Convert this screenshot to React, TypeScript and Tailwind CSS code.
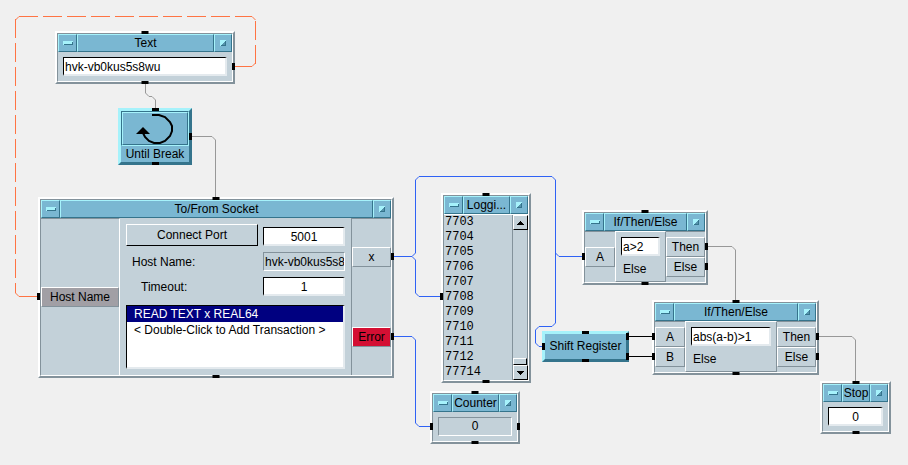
import React from "react";

interface NodeProps {
  title: string;
  className: string;
  children: React.ReactNode;
  ports?: string[];
}

interface WireProps {
  d: string;
  color: string;
  dash?: string;
}

const BLUE = "#2f62f5";
const GRAY = "#989898";
const ORANGE = "#ff7444";

const logLines = [
  "7703",
  "7704",
  "7705",
  "7706",
  "7707",
  "7708",
  "7709",
  "7710",
  "7711",
  "7712",
  "77714",
];

const wires: WireProps[] = [
  // feedback from Text to Host Name
  { d: "M235 66.5H252L255.5 63", color: ORANGE },
  { d: "M255.5 64V20", color: ORANGE, dash: "19 5" },
  { d: "M255.5 20L252 16.5", color: ORANGE },
  { d: "M19 16.5H252", color: ORANGE, dash: "19 5" },
  { d: "M19 16.5L15.5 20", color: ORANGE },
  { d: "M15.5 19V293", color: ORANGE, dash: "19 5" },
  { d: "M15.5 293L19 296.5H38", color: ORANGE },
  // sequence lines
  { d: "M145.5 84V93L149 96.5H152L155.5 100V109", color: GRAY },
  { d: "M192 136.5H212L215.5 140V198", color: GRAY },
  { d: "M708 246.5H732L735.5 250V301", color: GRAY },
  { d: "M819 336.5H852L855.5 340V381", color: GRAY },
  // data lines
  { d: "M394 256.5H412L415.5 253V180L419 176.5H552L555.5 180V323L552 326.5H539L535.5 330V343L539 346.5H542", color: BLUE },
  { d: "M412 256.5L415.5 260V293L419 296.5H441", color: BLUE },
  { d: "M555.5 253L559 256.5H582", color: BLUE },
  { d: "M394 336.5H412L415.5 340V423L419 426.5H431", color: BLUE },
  { d: "M629 336.5H652", color: "#000000" },
  { d: "M629 356.5H652", color: "#000000" },
];

const TOP = "-top-0.5 left-1/2 -translate-x-1/2 w-[7px] h-[3px]";
const BOTTOM = "-bottom-0.5 left-1/2 -translate-x-1/2 w-[7px] h-[3px]";

function Ports({ list }: { list: string[] }) {
  return (
    <>
      {list.map((place) => (
        <span key={place} className={`absolute bg-black ${place}`} />
      ))}
    </>
  );
}

function TitleBar({ title }: { title: string }) {
  const bevel =
    "border border-t-[#a6f2fb] border-l-[#a6f2fb] border-b-[#35748c] border-r-[#35748c]";
  return (
    <div className="flex h-[18px] bg-[#7ab7d2]">
      <button
        type="button"
        aria-label={`${title} menu`}
        className={`flex w-[19px] shrink-0 items-center justify-center ${bevel}`}
      >
        <svg width="10" height="4" shapeRendering="crispEdges">
          <path d="M0 0H10V1H9V3H1V4H0Z" fill="#a6f2fb" />
          <path d="M10 1V4H1V3H9V1Z" fill="#35748c" />
        </svg>
      </button>
      <h2
        className={`min-w-0 flex-1 overflow-hidden text-center leading-4 whitespace-nowrap ${bevel}`}
      >
        {title}
      </h2>
      <button
        type="button"
        aria-label={`Minimize ${title}`}
        className={`flex w-[18px] shrink-0 items-center justify-center ${bevel}`}
      >
        <svg width="6" height="6" shapeRendering="crispEdges">
          <path d="M0 0H6V1H5V2H4V3H3V4H2V5H1V6H0Z" fill="#a6f2fb" />
          <path d="M5 1H6V6H1V5H5Z" fill="#35748c" />
          <path d="M4 2H5V5H2V4H3V3H4Z" fill="#5593ac" />
        </svg>
      </button>
    </div>
  );
}

function Node({ title, className, children, ports = [] }: NodeProps) {
  return (
    <section
      className={`absolute border-2 border-t-white border-l-white border-b-[#83929b] border-r-[#83929b] ${className}`}
    >
      <div className="border border-t-[#83929b] border-l-[#83929b] border-b-white border-r-white bg-[#c3d1d9]">
        <TitleBar title={title} />
        {children}
      </div>
      <Ports list={[TOP, BOTTOM, ...ports]} />
    </section>
  );
}

function Field({
  label,
  value,
  className = "",
  id,
}: {
  label?: string;
  value: string;
  className?: string;
  id?: string;
}) {
  return (
    <input
      id={id}
      aria-label={label}
      defaultValue={value}
      className={`block h-[19px] w-full min-w-0 border border-r-2 border-b-2 border-t-black border-l-black border-b-[#e4eaee] border-r-[#e4eaee] bg-white pt-px pl-px leading-[15px] outline-none ${className}`}
    />
  );
}

function Terminal({
  name,
  className = "bg-[#c3d1d9]",
}: {
  name: string;
  className?: string;
}) {
  return (
    <div
      className={`h-5 border border-t-white border-l-white border-b-[#83929b] border-r-[#83929b] text-center leading-[18px] whitespace-nowrap ${className}`}
    >
      {name}
    </div>
  );
}

function Condition({
  inputs,
  value,
  label,
}: {
  inputs: string[];
  value: string;
  label: string;
}) {
  return (
    <div className="flex h-[51px]">
      <div
        className={`flex w-[30px] shrink-0 flex-col border-t border-[#83929b] ${
          inputs.length > 1 ? "pt-[5px]" : "justify-center"
        }`}
      >
        {inputs.map((name) => (
          <Terminal key={name} name={name} />
        ))}
      </div>
      <div className="min-w-0 flex-1 border border-t-white border-l-white border-b-[#83929b] border-r-[#83929b] px-[5px] pt-[5px]">
        <Field label={label} value={value} />
        <p className="pt-[5px] pl-0.5 leading-4">Else</p>
      </div>
      <div className="w-[39px] shrink-0 border-t border-[#83929b] pt-[5px]">
        <Terminal name="Then" />
        <Terminal name="Else" />
      </div>
    </div>
  );
}

function App() {
  const scrollButton =
    "flex h-[15px] shrink-0 items-center justify-center border border-t-white border-l-white border-b-black border-r-black bg-[#c3d1d9]";

  return (
    <main className="relative min-h-screen w-full overflow-hidden bg-[#f0f0f0] font-['Liberation_Sans',Arial,sans-serif] text-xs text-black">
      <svg
        className="absolute top-0 left-0"
        width="908"
        height="465"
        fill="none"
        aria-hidden="true"
      >
        {wires.map((wire) => (
          <path
            key={wire.d}
            d={wire.d}
            stroke={wire.color}
            strokeDasharray={wire.dash}
          />
        ))}
      </svg>

      <Node
        title="Text"
        className="top-[31px] left-[55px] w-[180px]"
        ports={["-right-0.5 top-[30px] h-[7px] w-[3px]"]}
      >
        <div className="px-[5px] py-[5px]">
          <Field label="Text value" value="hvk-vb0kus5s8wu" />
        </div>
      </Node>

      <section className="absolute top-[108px] left-[118px] w-[74px] border-3 border-t-[#a6f2fb] border-l-[#a6f2fb] border-b-[#35748c] border-r-[#35748c] bg-[#7ab7d2]">
        <div className="border border-[#a6f2fb] border-t-[#35748c] border-l-[#35748c]">
          <div className="flex h-[33px] items-center justify-center border border-t-[#a6f2fb] border-l-[#a6f2fb] border-b-[#35748c] border-r-[#35748c]">
            <svg width="38" height="31" viewBox="0 0 38 31" fill="none">
              <path
                d="M16 2H23L29 4L34 9L36 13V18L34 23L29 28L24 30H18L13 28L9 24L7 20"
                stroke="#000000"
                strokeWidth="2"
              />
              <path d="M7 14L14 21H0Z" fill="#000000" />
            </svg>
          </div>
        </div>
        <h2 className="text-center leading-4 whitespace-nowrap">Until Break</h2>
        <Ports
          list={[
            "-top-[3px] left-[31px] h-[3px] w-[7px]",
            "-bottom-[3px] left-[31px] h-[3px] w-[7px]",
            "-right-[3px] top-[22px] h-[7px] w-[3px]",
          ]}
        />
      </section>

      <Node
        title="To/From Socket"
        className="top-[197px] left-[38px] w-[356px]"
        ports={[
          "-left-[3px] top-[94px] h-[7px] w-[3px]",
          "-right-0.5 top-[54px] h-[7px] w-[3px]",
          "-right-0.5 top-[134px] h-[7px] w-[3px]",
        ]}
      >
        <div className="flex h-[157px]">
          <div className="w-[79px] shrink-0 border-t border-r border-t-[#83929b] border-r-white pt-[68px]">
            <Terminal name="Host Name" className="bg-[#a19fa5]" />
          </div>
          <div className="min-w-0 flex-1 px-1.5 pt-1.5">
            <div className="grid auto-rows-[25px] grid-cols-[132px_1fr] items-center gap-x-[5px]">
              <button
                type="button"
                className="h-[22px] self-start border border-t-white border-l-white border-b-black border-r-black"
              >
                Connect Port
              </button>
              <Field label="Port" value="5001" className="text-center" />
              <label htmlFor="host" className="pl-1.5">
                Host Name:
              </label>
              <input
                id="host"
                readOnly
                value="hvk-vb0kus5s8wu"
                className="block h-[19px] w-full min-w-0 border border-t-[#83929b] border-l-[#83929b] border-b-white border-r-white pl-px outline-none"
              />
              <label htmlFor="timeout" className="pl-[15px]">
                Timeout:
              </label>
              <Field id="timeout" value="1" className="text-center" />
            </div>
            <ul
              role="listbox"
              aria-label="Transactions"
              className="mt-1.5 h-16 border border-r-2 border-b-2 border-t-black border-l-black border-b-[#e4eaee] border-r-[#e4eaee] bg-white leading-4"
            >
              <li
                role="option"
                aria-selected="true"
                className="bg-[#000080] pl-[7px] text-white"
              >
                READ TEXT x REAL64
              </li>
              <li role="option" aria-selected="false" className="pl-[7px]">
                &lt; Double-Click to Add Transaction &gt;
              </li>
            </ul>
          </div>
          <div className="flex w-10 shrink-0 flex-col gap-[60px] border-t border-l border-[#83929b] pt-7">
            <Terminal name="x" />
            <Terminal name="Error" className="bg-[#d40f33]" />
          </div>
        </div>
      </Node>

      <Node
        title="Loggi..."
        className="top-[193px] left-[441px] w-[90px]"
        ports={["-left-[3px] top-[98px] h-[7px] w-[3px]"]}
      >
        <div className="flex border-t border-white">
          <ol className="flex-1 pl-px font-['Liberation_Mono','Courier_New',monospace] leading-[15px]">
            {logLines.map((line) => (
              <li key={line}>{line}</li>
            ))}
          </ol>
          <div className="flex w-4 flex-col border-l border-[#83929b]">
            <button type="button" aria-label="Scroll up" className={scrollButton}>
              <svg width="7" height="4" shapeRendering="crispEdges">
                <path d="M3 0H4L7 4H0Z" />
              </svg>
            </button>
            <div className="flex flex-1 items-end border-r border-[#83929b]">
              <div className="h-[7px] w-full border border-t-white border-l-white border-b-black border-r-black bg-[#c3d1d9]" />
            </div>
            <button type="button" aria-label="Scroll down" className={scrollButton}>
              <svg width="7" height="4" shapeRendering="crispEdges">
                <path d="M0 0H7L4 4H3Z" />
              </svg>
            </button>
          </div>
        </div>
      </Node>

      <Node
        title="Counter"
        className="top-[391px] left-[430px] w-[90px]"
        ports={[
          "-left-0.5 top-[30px] h-[7px] w-[3px]",
          "-right-0.5 top-[30px] h-[7px] w-[3px]",
        ]}
      >
        <div className="p-[5px]">
          <output className="block border border-t-[#83929b] border-l-[#83929b] border-b-white border-r-white text-center leading-[17px]">
            0
          </output>
        </div>
      </Node>

      <Node
        title="If/Then/Else"
        className="top-[210px] left-[582px] w-[126px]"
        ports={[
          "-left-0.5 top-[41px] h-[7px] w-[3px]",
          "-right-0.5 top-[31px] h-[7px] w-[3px]",
          "-right-0.5 top-[51px] h-[7px] w-[3px]",
        ]}
      >
        <Condition inputs={["A"]} value="a>2" label="First condition" />
      </Node>

      <section className="absolute top-[331px] left-[542px] w-[87px] border-3 border-t-[#a6f2fb] border-l-[#a6f2fb] border-b-[#35748c] border-r-[#35748c] bg-[#7ab7d2]">
        <h2 className="text-center leading-[25px] whitespace-nowrap">
          Shift Register
        </h2>
        <Ports
          list={[
            "-top-[3px] left-[37px] h-[3px] w-[7px]",
            "-bottom-[3px] left-[37px] h-[3px] w-[7px]",
            "-left-[3px] top-[9px] h-[7px] w-[3px]",
            "-right-[3px] -top-px h-[7px] w-[3px]",
            "-right-[3px] top-[19px] h-[7px] w-[3px]",
          ]}
        />
      </section>

      <Node
        title="If/Then/Else"
        className="top-[300px] left-[652px] w-[167px]"
        ports={[
          "-left-0.5 top-[31px] h-[7px] w-[3px]",
          "-left-0.5 top-[51px] h-[7px] w-[3px]",
          "-right-0.5 top-[31px] h-[7px] w-[3px]",
          "-right-0.5 top-[51px] h-[7px] w-[3px]",
        ]}
      >
        <Condition
          inputs={["A", "B"]}
          value="abs(a-b)>1"
          label="Second condition"
        />
      </Node>

      <Node title="Stop" className="top-[381px] left-[820px] w-[71px]">
        <div className="p-[5px]">
          <Field label="Stop value" value="0" className="text-center" />
        </div>
      </Node>
    </main>
  );
}

export default App;
